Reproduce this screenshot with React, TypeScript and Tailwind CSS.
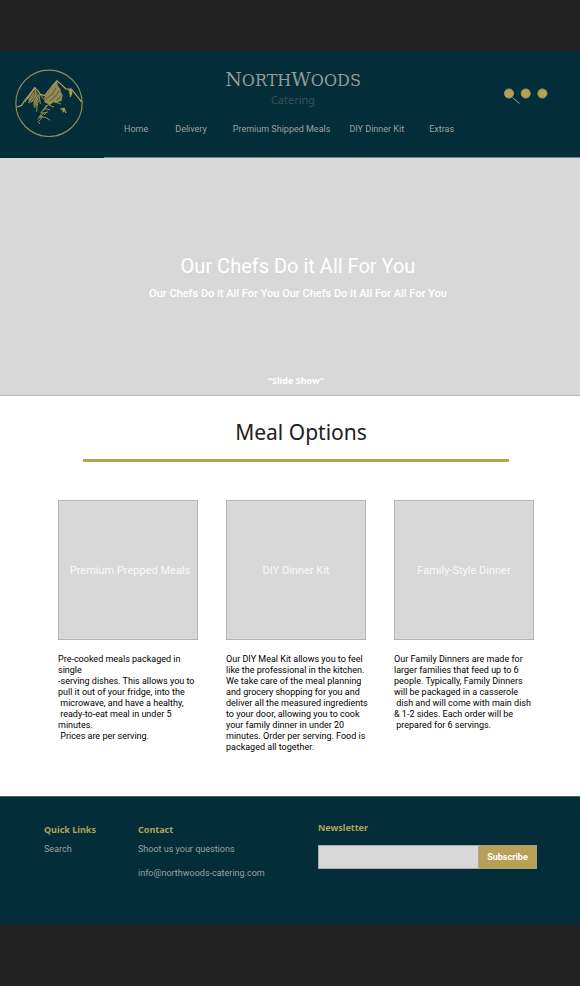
const navLinks = [
  { label: 'Home', spacing: '' },
  { label: 'Delivery', spacing: 'ml-[27px]' },
  { label: 'Premium Shipped Meals', spacing: 'ml-[26px]' },
  { label: 'DIY Dinner Kit', spacing: 'ml-[19px]' },
  { label: 'Extras', spacing: 'ml-[25px]' },
];

const meals = [
  {
    title: 'Premium Prepped Meals',
    shift: 'pl-1',
    text: `Pre-cooked meals packaged in
single
-serving dishes. This allows you to
pull it out of your fridge, into the
 microwave, and have a healthy,
 ready-to-eat meal in under 5
minutes.
 Prices are per serving.`,
  },
  {
    title: 'DIY Dinner Kit',
    shift: '',
    text: `Our DIY Meal Kit allows you to feel
like the professional in the kitchen.
We take care of the meal planning
and grocery shopping for you and
deliver all the measured ingredients
to your door, allowing you to cook
your family dinner in under 20
minutes. Order per serving. Food is
packaged all together.`,
  },
  {
    title: 'Family-Style Dinner',
    shift: '',
    text: `Our Family Dinners are made for
larger families that feed up to 6
people. Typically, Family Dinners
will be packaged in a casserole
 dish and will come with main dish
& 1-2 sides. Each order will be
 prepared for 6 servings.`,
  },
];

function Logo() {
  return (
    <svg className="size-[68px]" viewBox="44 86 204 204" fill="none" stroke="#b8a057" strokeWidth="3" strokeLinecap="round" strokeLinejoin="round" role="img" aria-label="NorthWoods mountain logo">
      <circle cx="146" cy="189" r="99.5" strokeWidth="3.5" stroke="#918c5a" />
      <path d="M50 200 L64 195 L74 179 L88 162 L103 142 L112 150 L120 162 L133 166 L145 151 L156 137 L170 121 L183 133 L197 146 L213 146 L226 162 L243 184" strokeWidth="3.5" />
      <path d="M170 121 L158 136 L147 151 L138 163 L132 170 L132 186 L147 193 L159 186 L166 187 L184 181 L187 165 L182 155 L180 145 L173 137 Z" fill="#b8a057" fillOpacity="0.8" stroke="none" />
      <path d="M166 144 L156 161 L137 176 M176 153 L164 169 L150 181 M182 168 L170 178" stroke="#03303a" strokeWidth="1.500" />
      <path d="M103 143 L96 154 L82 170 L88 190 L98 183 L107 196 L114 184 L117 166 L109 153 Z" fill="#b8a057" fillOpacity="0.45" stroke="none" />
      <path d="M103 143 L93 159 L80 176 M103 143 L107 158 L94 174 L84 187 M99 160 L87 179 M108 163 L94 185 M113 164 L99 192 M112 174 L101 198 M117 180 L103 202 M111 191 L109 213 M93 155 L75 184 M116 163 L120 190 M121 164 L130 177" strokeWidth="2.500" />
      <path d="M146 190 L134 205 L121 217 L129 218 L118 231 L126 230 L114 244 L118 250 M134 205 L148 208 M129 218 L142 215 M124 229 L137 232 L148 239 M131 224 L137 218 M159 183 L146 195 L160 200 M166 185 L181 191 M138 195 L128 210 M122 222 L113 236" strokeWidth="2.500" />
      <path d="M205 148 L214 148 L215 159 L210 170 L208 155 Z M181 206 L192 203 L197 218 L191 210 L188 216 L187 207 Z" fill="#b8a057" strokeWidth="2" />
    </svg>
  );
}

export default function App() {
  return (
    <div className="bg-[#212121] pt-[51px] pb-[62px] font-[Roboto,sans-serif] text-[9px] leading-[11px]">
      <header className="flex bg-[#032d38]">
        <a href="#home" aria-label="NorthWoods home" className="h-[107px] w-[104px] shrink-0 pt-[18px] pl-[15px]">
          <Logo />
        </a>
        <div className="flex flex-1 border-b border-[#74898d] pr-8 pl-5">
          <div className="flex flex-1 flex-col">
            <div className="w-[338px] pt-4 text-center">
              <p className="font-['DejaVu_Serif',serif] text-[19px] leading-[24px] text-[#939a9c]">
                N<span className="text-[16px]">ORTH</span>W<span className="text-[16px]">OODS</span>
              </p>
              <p className="font-['Noto_Sans',sans-serif] text-[11px] leading-[14px] text-[#375159]">Catering</p>
            </div>
            <nav className="flex pt-[17px] whitespace-nowrap text-[#9ba2a3]">
              {navLinks.map((link) => (
                <a key={link.label} href="#menu" className={link.spacing}>{link.label}</a>
              ))}
            </nav>
          </div>
          <svg className="mt-9 h-[18px] w-[44px] shrink-0" viewBox="0 0 44 18" fill="#b8a057" stroke="#8f906c" strokeWidth="1" role="img" aria-label="Search, account and cart">
            <circle cx="5" cy="6.500" r="4.600" />
            <circle cx="21.700" cy="6.500" r="4.600" />
            <circle cx="38.400" cy="6.500" r="4.600" />
            <path d="M8.500 10.500 L15.500 16.500" stroke="#929a9a" />
          </svg>
        </div>
      </header>

      <main className="bg-white">
        <section className="flex h-[238px] flex-col items-center border-b border-[#bababa] bg-[#d8d8d8] pt-[95px] pb-[9px] pl-4 text-white">
          <h1 className="text-[20px] leading-[26px]">Our Chefs Do it All For You</h1>
          <p className="pt-2 text-[11px] leading-[14px] font-medium">Our Chefs Do it All For You Our Chefs Do it All For All For You</p>
          <p className="mt-auto pr-1 font-['Noto_Sans',sans-serif] font-bold">“Slide Show”</p>
        </section>

        <section className="h-[400px] pt-[22px]">
          <h2 className="pl-[22px] text-center font-['Noto_Sans',sans-serif] text-[21px] leading-[28px] text-[#212121]">Meal Options</h2>
          <hr className="mt-[13px] mr-[71px] ml-[83px] border-t-[3px] border-[#b8a057]" />
          <div className="mr-[46px] ml-[58px] grid grid-cols-3 gap-7 pt-[38px]">
            {meals.map((meal) => (
              <article key={meal.title} className="min-w-0">
                <div className={`flex aspect-square items-center justify-center border border-[#b5b5b5] bg-[#d8d8d8] ${meal.shift}`}>
                  <h3 className="pt-px text-[11px] leading-[14px] whitespace-nowrap text-[#f8f8f8]">{meal.title}</h3>
                </div>
                <p className="pt-[14px] whitespace-pre text-black">{meal.text}</p>
              </article>
            ))}
          </div>
        </section>
      </main>

      <footer className="flex h-[128px] border-t border-[#46656d] bg-[#032d38] pt-[27px] pr-[43px] pl-11 text-[#9ba2a3]">
        <div className="w-[94px] shrink-0">
          <h2 className="font-['Noto_Sans',sans-serif] font-bold text-[#b8a057]">Quick Links</h2>
          <a href="#search" className="mt-[9px] block">Search</a>
        </div>
        <div className="w-[180px] shrink-0">
          <h2 className="font-['Noto_Sans',sans-serif] font-bold text-[#b8a057]">Contact</h2>
          <p className="mt-[9px]">Shoot us your questions</p>
          <a href="mailto:info@northwoods-catering.com" className="mt-[13px] block">info@northwoods-catering.com</a>
        </div>
        <form className="-mt-0.5 flex-1" onSubmit={(e) => e.preventDefault()}>
          <label htmlFor="newsletter" className="block font-['Noto_Sans',sans-serif] font-bold text-[#b8a057]">Newsletter</label>
          <div className="mt-3 flex h-6">
            <input id="newsletter" type="email" className="min-w-0 flex-1 border border-[#a4abad] bg-[#d8d8d8] px-2 text-black outline-none" />
            <button type="submit" className="w-[58px] border border-l-0 border-[#a8a178] bg-[#b8a057] font-bold text-white">Subscribe</button>
          </div>
        </form>
      </footer>
    </div>
  );
}
